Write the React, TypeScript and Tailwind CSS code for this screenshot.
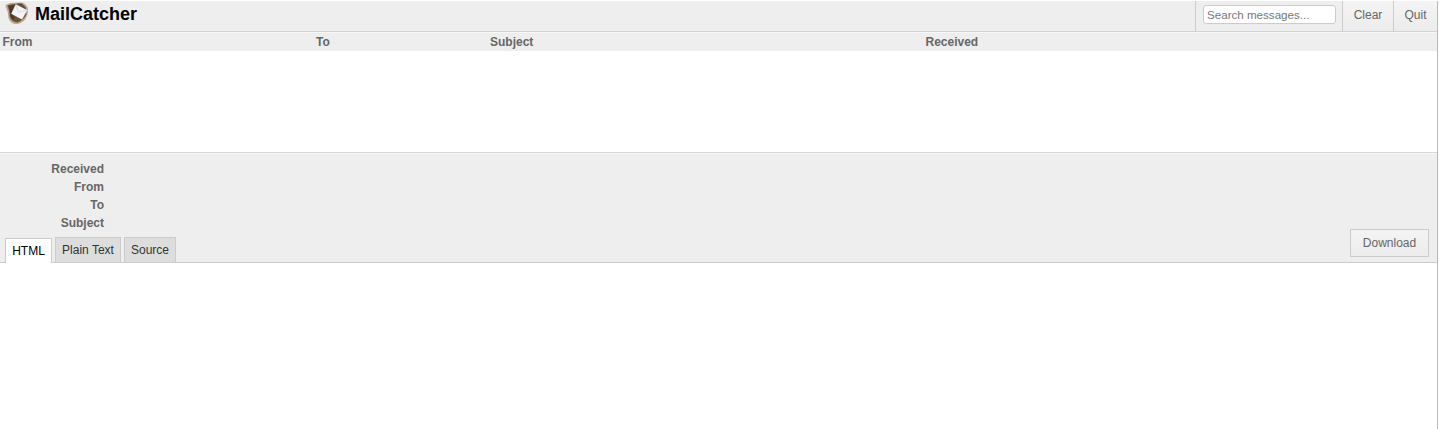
import React from "react";

const columns = [
  { name: "From", width: "w-[313.5px]" },
  { name: "To", width: "w-[174px]" },
  { name: "Subject", width: "w-[435.5px]" },
  { name: "Received", width: "w-[514px]" },
];

const fields = ["Received", "From", "To", "Subject"];

function Logo() {
  return (
    <svg width="24" height="24" viewBox="0 0 24 24" className="block shrink-0" aria-hidden="true">
      <path d="M.8 4 L5 2 L17 1.5 Q21 2.5 22.8 7 Q23.5 13 20.5 18 Q16 23.5 10 23 Q5 22 3.5 17 Q3 10 .8 6Z" fill="#b5a793" />
      <path d="M2.5 4.3 L9 3 L16.5 2.5 L20.5 6 L21.5 13 Q18.5 19.5 12.5 21.5 Q7 21 4.8 16 Q4.5 9 2.5 4.3Z" fill="#70523a" />
      <path d="M4 5 L9.5 4 L6.5 12.5 L10 17 L8 19 L5.5 15Z" fill="#4f3827" />
      <path d="M12 2.6 L17 2.8 L20.5 7.5Z" fill="#5b5148" />
      <path d="M10.8 3.2 L22.3 9.3 L17 18.6 L6.2 12.8Z" fill="#f3f3f8" />
      <path d="M10.9 3.8 L13.6 11.2 L21.6 9.5" fill="none" stroke="#d0d0d9" strokeWidth=".7" />
    </svg>
  );
}

export default function App() {
  return (
    <div className="flex h-[429px] w-[1439px] overflow-hidden bg-white pr-px pt-px font-['Liberation_Sans',Arial,sans-serif] text-[12px] leading-[18px] text-[#666]">
      <div className="flex min-w-0 flex-1 flex-col border-r border-[#b8b8b8]">
        <header className="flex h-[31px] shrink-0 justify-between border-b border-[#d2d2d2] bg-[#eee]">
          <div className="flex h-6 items-center pl-[5px]">
            <Logo />
            <h1 className="ml-[6px] pt-[2px] text-[18px] font-bold leading-6 text-black">MailCatcher</h1>
          </div>
          <nav className="flex h-[30px]">
            <div className="flex w-[147px] border-l border-[#ccc] pl-[7px] pt-1">
              <input
                type="text"
                placeholder="Search messages..."
                className="h-[19px] w-[133px] rounded-[3px] border border-[#ccc] bg-white px-[3px] text-[11.6px] text-[#666] outline-none placeholder:text-[#777]"
              />
            </div>
            <button className="w-[51px] border-l border-[#ccc] bg-gradient-to-b from-[#f4f4f4] to-[#ececec] pb-[2px]">Clear</button>
            <button className="w-[44px] border-l border-[#ccc] bg-gradient-to-b from-[#f4f4f4] to-[#ececec] pb-[2px]">Quit</button>
          </nav>
        </header>

        <section className="h-[120px] shrink-0">
          <div className="flex h-[19px] border-t border-[#f7f7f7] bg-[#eee] font-bold">
            {columns.map((column) => (
              <div key={column.name} className={`${column.width} shrink-0 pl-[2.5px]`}>{column.name}</div>
            ))}
          </div>
        </section>

        <section className="flex h-[111px] shrink-0 flex-col border-b border-t border-b-[#ccc] border-t-[#d6d6d6] bg-[#eee]">
          <dl className="h-[77px] border-t border-[#f8f8f8] pt-[6px] font-bold">
            {fields.map((field) => (
              <dt key={field} className="w-[104px] text-right">{field}</dt>
            ))}
          </dl>
          <div className="flex h-8 justify-between pl-[5px] pr-2">
            <nav className="mt-[7px] flex h-[26px] items-start gap-[3px] text-[#333]">
              <button className="mt-px h-[25px] w-[47px] border border-b-0 border-[#ccc] bg-white text-black">HTML</button>
              <button className="h-[25px] w-[66px] border border-b-0 border-[#ccc] bg-[#ddd]">Plain Text</button>
              <button className="h-[25px] w-[52px] border border-b-0 border-[#ccc] bg-[#ddd]">Source</button>
            </nav>
            <button className="-mt-px h-7 w-[79px] border border-[#ccc] bg-gradient-to-b from-[#f4f4f4] to-[#ececec]">Download</button>
          </div>
        </section>

        <main className="flex-1 bg-white" />
      </div>
    </div>
  );
}
